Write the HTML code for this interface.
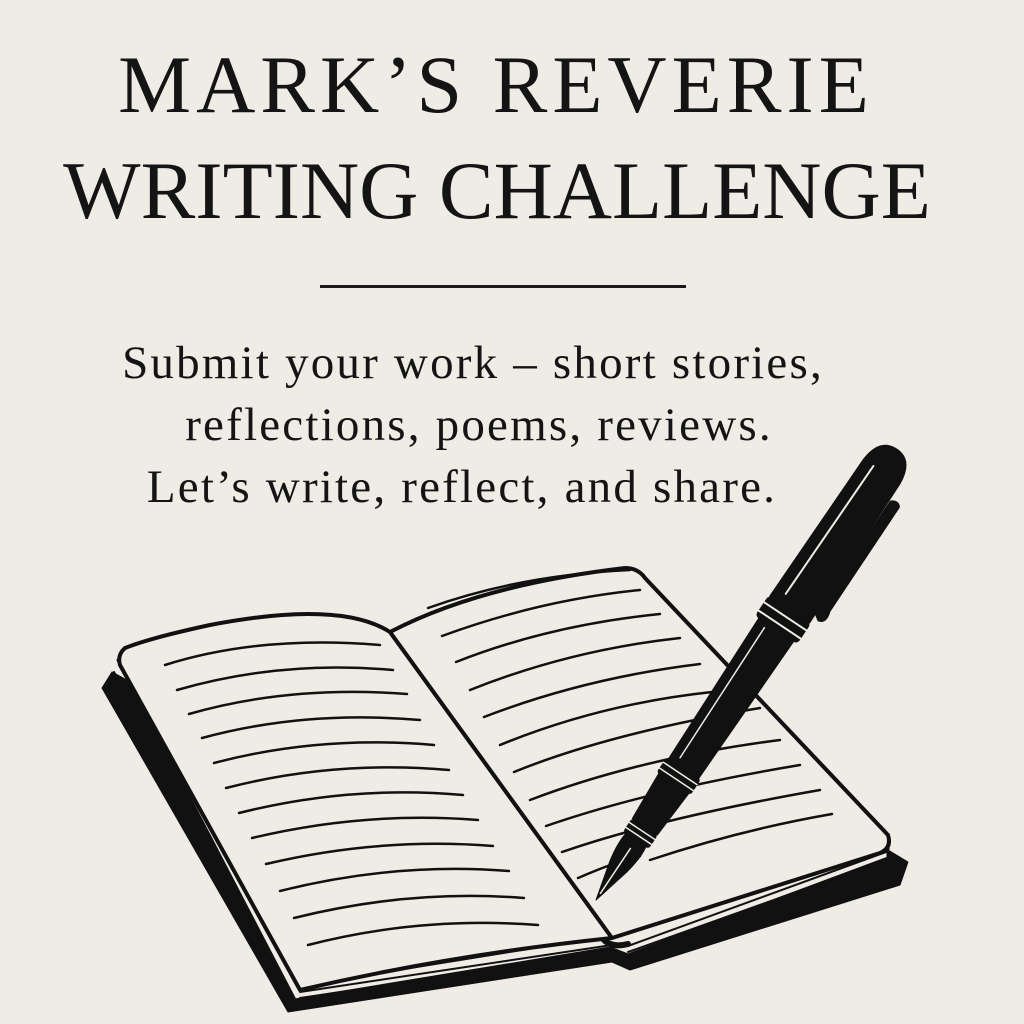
<!DOCTYPE html>
<html><head><meta charset="utf-8"><style>
html,body{margin:0;padding:0}
body{width:1024px;height:1024px;background:#efebe5;position:relative;overflow:hidden;font-family:"Liberation Serif",serif;color:#141414}
.t{position:absolute;left:0;width:1000px;text-align:center;font-size:82px;line-height:1;white-space:nowrap}
.s{position:absolute;left:0;text-align:center;font-size:47px;letter-spacing:2.2px;line-height:1;white-space:nowrap}
</style></head><body>
<div class="t" style="top:44px;letter-spacing:5px;left:-4px">MARK’S REVERIE</div>
<div class="t" style="top:150px;left:-3px;letter-spacing:0px">WRITING CHALLENGE</div>
<div style="position:absolute;left:320px;top:285px;width:366px;height:3px;background:#1a1a1a"></div>
<div class="s" style="top:340px;width:946px">Submit your work – short stories,</div>
<div class="s" style="top:402px;width:958px">reflections, poems, reviews.</div>
<div class="s" style="top:464px;width:924px">Let’s write, reflect, and share.</div>
<svg width="1024" height="1024" style="position:absolute;left:0;top:0" fill="none" stroke="#111" stroke-linecap="round" stroke-linejoin="round">
<path d="M112 672 L102 688 L288 1012 L612 962 L630 970 L900 885 L908 862 L888 850 L615 945 Z" fill="#111"/>
<path d="M118 660 L295 1000 L610 948 L628 955 L888 858 L888 842 L612 935 L302 985 Z" fill="#efebe5" stroke-width="3"/>
<path d="M114 672 L293 1004 M110 682 L290 1010 M300 992 L612 945 M300 998 L612 952 M628 946 L886 852 M628 952 L886 860" stroke-width="2"/>
<path d="M390 632 Q340 600 210 625 Q150 638 125 648 Q117 655 120 665 L300 990 Q450 955 612 938 Z" fill="#efebe5" stroke-width="4"/>
<path d="M390 632 Q480 585 625 568 Q638 568 645 578 L888 835 Q892 848 880 853 L612 938 Z" fill="#efebe5" stroke-width="4"/>
<g stroke-width="2.5">
<path d="M165 665 Q260 635 380 645"/>
<path d="M177 690 Q280 660 393 670"/>
<path d="M189 714 Q290 685 407 694"/>
<path d="M202 738 Q305 710 420 720"/>
<path d="M214 763 Q320 735 434 745"/>
<path d="M226 788 Q335 760 449 770"/>
<path d="M239 813 Q350 785 463 795"/>
<path d="M252 838 Q365 811 478 820"/>
<path d="M266 864 Q380 837 493 846"/>
<path d="M280 891 Q395 862 509 871"/>
<path d="M294 918 Q410 889 524 898"/>
<path d="M308 945 Q420 916 538 925"/>
<path d="M428 608 Q520 575 630 570"/>
<path d="M442 636 Q540 600 640 590"/>
<path d="M456 662 Q550 625 660 614"/>
<path d="M470 690 Q570 650 680 638"/>
<path d="M484 717 Q585 678 700 664"/>
<path d="M500 745 Q600 704 712 692"/>
<path d="M514 772 Q610 733 760 708"/>
<path d="M530 800 Q640 758 780 740"/>
<path d="M546 826 Q650 790 800 765"/>
<path d="M562 852 Q660 818 820 790"/>
<path d="M578 878 Q620 860 640 856"/>
<path d="M650 860 Q740 830 832 814"/>
</g>
<path d="M390 632 L612 938" stroke-width="3"/>
<path d="M604 940 Q612 948 628 944" stroke-width="6"/>
<g transform="translate(596,900) rotate(-56.3)">
<path d="M0 0 L40 -10 Q60 -14 72 -12 L72 12 Q60 14 40 10 Z" fill="#111"/>
<path d="M8 0 L62 0" stroke="#efebe5" stroke-width="1.5"/>
<rect x="72" y="-15" width="16" height="30" rx="3" fill="#111"/>
<path d="M77 -15 V15 M83 -15 V15" stroke="#efebe5" stroke-width="1.5"/>
<path d="M88 -15 L140 -18 L140 18 L88 15 Z" fill="#111"/>
<rect x="140" y="-20" width="18" height="40" rx="3" fill="#111"/>
<path d="M145 -20 V20 M152 -20 V20" stroke="#efebe5" stroke-width="1.5"/>
<path d="M158 -18 L325 -21 L325 21 L158 18 Z" fill="#111"/>
<path d="M165 -9 L320 -11" stroke="#efebe5" stroke-width="1.5"/>
<rect x="325" y="-25" width="24" height="50" rx="4" fill="#111"/>
<path d="M331 -25 V25 M341 -25 V25" stroke="#efebe5" stroke-width="2"/>
<path d="M349 -24 L515 -22 Q542 -20 542 0 Q542 20 515 22 L349 24 Z" fill="#111"/>
<path d="M360 -12 L515 -10" stroke="#efebe5" stroke-width="2"/>
<path d="M360 24 L495 24 Q500 30 495 34 L370 34 Q358 38 356 30 Z" fill="#111" stroke-width="2"/>
</g>
</svg>
</body></html>
